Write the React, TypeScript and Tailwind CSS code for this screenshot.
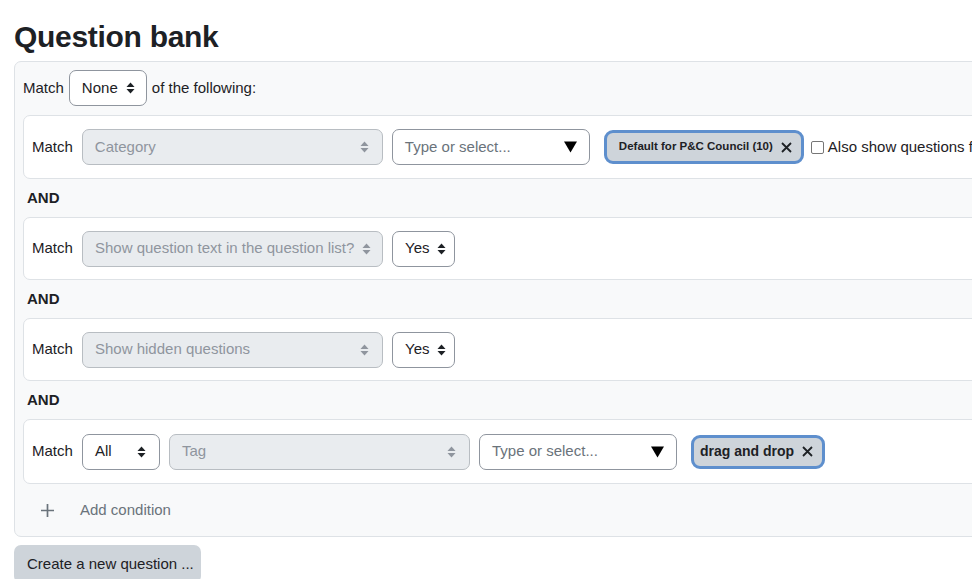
import React from "react";

function UpDown({ className = "" }: { className?: string }) {
  return (
    <svg width="9" height="12" viewBox="0 0 9 12" className={`shrink-0 ${className}`}>
      <path d="M4.5 0.5 L8.5 5 H0.5 Z" fill="currentColor" />
      <path d="M4.5 11.5 L8.5 7 H0.5 Z" fill="currentColor" />
    </svg>
  );
}

function Select({ label, width, disabled = false }: { label: string; width: string; disabled?: boolean }) {
  return (
    <div
      className={`${width} h-[36px] shrink-0 flex items-center justify-between gap-[8px] pl-[12px] pr-[13px] rounded-[7px] border ${
        disabled
          ? "bg-[#e9ecef] border-[#b8bdc2] text-[#8f959e]"
          : "bg-white border-[#8f959e] text-[#1d2125]"
      }`}
    >
      <span className="whitespace-nowrap">{label}</span>
      <UpDown className={disabled ? "text-[#8f959e]" : "text-[#1d2125]"} />
    </div>
  );
}

function TypeSelect() {
  return (
    <div className="w-[198px] h-[36px] shrink-0 flex items-center justify-between pl-[12px] pr-[12px] rounded-[7px] border border-[#8f959e] bg-white">
      <span className="text-[#6a737b] whitespace-nowrap">Type or select...</span>
      <svg width="13" height="12" viewBox="0 0 13 12" className="shrink-0">
        <path d="M0 0.5 H13 L6.5 11.5 Z" fill="#000" />
      </svg>
    </div>
  );
}

function Chip({ label, textClass, pad }: { label: string; textClass: string; pad: string }) {
  return (
    <div
      className={`h-[34px] shrink-0 flex items-center gap-[8px] pr-[9px] rounded-[9px] border-[3px] border-[#5e8fcd] bg-[#ced4da] ml-[5px] ${pad}`}
    >
      <span className={`font-bold whitespace-nowrap text-[#1d2125] ${textClass}`}>{label}</span>
      <svg width="11" height="11" viewBox="0 0 11 11" className="shrink-0">
        <path d="M1 1 L10 10 M10 1 L1 10" stroke="#1d2125" strokeWidth="1.8" />
      </svg>
    </div>
  );
}

function Card({ children, height }: { children: React.ReactNode; height: string }) {
  return (
    <div
      className={`${height} flex items-center gap-[9px] pl-[8px] bg-white border border-[#dee2e6] rounded-[7px] whitespace-nowrap`}
    >
      <span className="w-[41px]">Match</span>
      {children}
    </div>
  );
}

function And() {
  return <div className="h-[38px] flex items-center pl-[4px] font-bold">AND</div>;
}

export default function App() {
  return (
    <div
      className="w-[972px] h-[579px] overflow-hidden bg-white text-[15px] text-[#1d2125] pl-[14px] pt-[19px]"
      style={{ fontFamily: '"Liberation Sans", Arial, sans-serif' }}
    >
      <h1 className="text-[30px] leading-[36px] font-bold tracking-[-0.3px] mb-[6px]">Question bank</h1>

      <div className="w-[1000px] bg-[#f8f9fa] border border-[#dee2e6] rounded-[7px] p-[8px]">
        <div className="flex items-center gap-[5px] mb-[9px]">
          <span>Match</span>
          <Select label="None" width="w-[78px]" />
          <span>of the following:</span>
        </div>

        <Card height="h-[64px]">
          <Select label="Category" width="w-[301px]" disabled />
          <TypeSelect />
          <Chip label="Default for P&C Council (10)" textClass="text-[11.5px]" pad="pl-[12px]" />
          <div className="flex items-center gap-[4px] -ml-[2px]">
            <span className="w-[13px] h-[13px] border border-[#767676] rounded-[2px] bg-white" />
            <span>Also show questions from subcategories</span>
          </div>
        </Card>
        <And />
        <Card height="h-[63px]">
          <Select label="Show question text in the question list?" width="w-[301px]" disabled />
          <Select label="Yes" width="w-[63px]" />
        </Card>
        <And />
        <Card height="h-[63px]">
          <Select label="Show hidden questions" width="w-[301px]" disabled />
          <Select label="Yes" width="w-[63px]" />
        </Card>
        <And />
        <Card height="h-[65px]">
          <Select label="All" width="w-[78px]" />
          <Select label="Tag" width="w-[301px]" disabled />
          <TypeSelect />
          <Chip label="drag and drop" textClass="text-[14px]" pad="pl-[6px]" />
        </Card>

        <div className="h-[36px] mt-[8px] flex items-center pl-[18px] text-[#6a737b]">
          <svg width="13" height="13" viewBox="0 0 13 13" className="mr-[26px] shrink-0">
            <path d="M6.5 0 V13 M0 6.5 H13" stroke="#6a737b" strokeWidth="1.7" />
          </svg>
          <span>Add condition</span>
        </div>
      </div>

      <button className="mt-[8px] h-[38px] w-[187px] rounded-[7px] bg-[#ced4da] text-left pl-[13px] text-[#1d2125]">
        Create a new question ...
      </button>
    </div>
  );
}
